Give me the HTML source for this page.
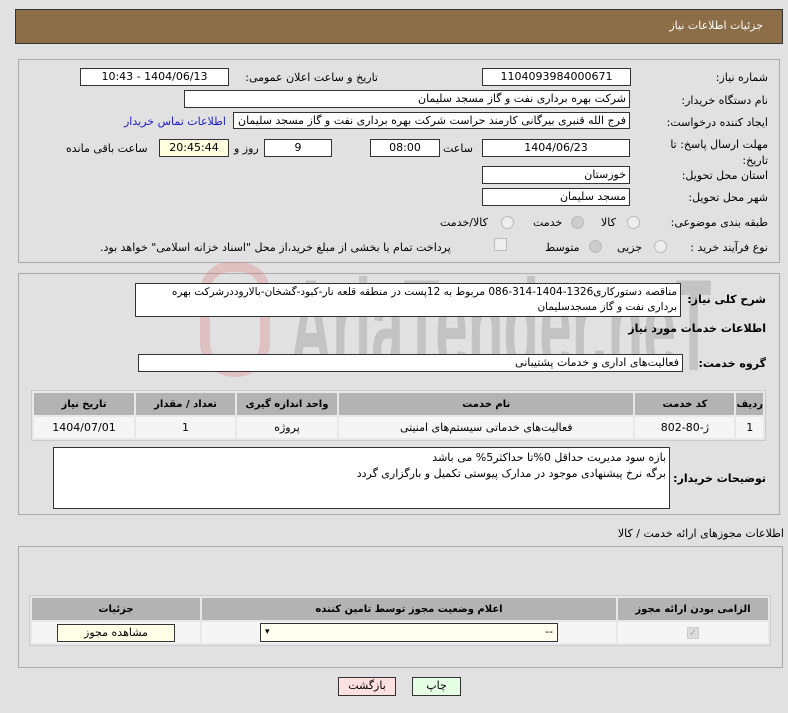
<!DOCTYPE html>
<html><head><meta charset="utf-8"><style>
*{box-sizing:border-box;margin:0;padding:0}
body{width:788px;height:713px;background:#e1e1e1;font-family:"DejaVu Sans","Liberation Sans",sans-serif;font-size:11px;color:#000;position:relative;overflow:hidden}
.a{position:absolute;white-space:nowrap}
.box{position:absolute;background:#fff;border:1px solid #333;font-size:11px;line-height:16px;direction:rtl;overflow:hidden;white-space:nowrap;padding:0 3px}
.c{text-align:center}
.panel{position:absolute;border:1px solid #aaa;background:#e1e1e1}
.lab{position:absolute;direction:rtl;text-align:right;white-space:nowrap;font-size:11px}
.rad{position:absolute;width:13px;height:13px;border-radius:50%;border:1px solid #bbb;background:#eee}
table{position:absolute;border-collapse:separate;border-spacing:2px;background:#e8e8e8;border:1px solid #ccc;direction:rtl}
th{background:#b3b3b3;font-weight:bold;font-size:10px;height:22px}
td{background:#f5f5f5;text-align:center;height:21px;font-size:11px}
.bl{font-weight:bold;font-size:11px}
</style></head><body>
<div class="a" style="left:15px;top:9px;width:768px;height:35px;background:#8b6d48;border:1px solid #333"></div>
<div class="lab" style="right:25px;top:19px;color:#fff">جزئیات اطلاعات نیاز</div>

<div class="panel" style="left:18px;top:59px;width:762px;height:204px"></div>
<div class="lab" style="right:20px;top:71px">شماره نیاز:</div>
<div class="box c" style="left:482px;top:68px;width:149px;height:18px">1104093984000671</div>
<div class="lab" style="left:221px;top:71px;width:157px">تاریخ و ساعت اعلان عمومی:</div>
<div class="box c" style="left:80px;top:68px;width:149px;height:18px">1404/06/13 - 10:43</div>
<div class="lab" style="right:20px;top:94px">نام دستگاه خریدار:</div>
<div class="box" style="left:184px;top:90px;width:446px;height:18px">شرکت بهره برداری نفت و گاز مسجد سلیمان</div>
<div class="lab" style="right:20px;top:116px">ایجاد کننده درخواست:</div>
<div class="box" style="left:233px;top:112px;width:397px;height:17px">فرج الله قنبری بیرگانی کارمند حراست شرکت بهره برداری نفت و گاز مسجد سلیمان</div>
<div class="lab" style="left:124px;top:115px;color:#1a1acc">اطلاعات تماس خریدار</div>
<div class="lab" style="right:20px;top:137px;line-height:16px">مهلت ارسال پاسخ: تا<br>تاریخ:</div>
<div class="box c" style="left:482px;top:139px;width:148px;height:18px">1404/06/23</div>
<div class="lab" style="left:443px;top:142px">ساعت</div>
<div class="box c" style="left:370px;top:139px;width:70px;height:18px">08:00</div>
<div class="box c" style="left:264px;top:139px;width:68px;height:18px">9</div>
<div class="lab" style="left:234px;top:142px">روز و</div>
<div class="box c" style="left:159px;top:139px;width:70px;height:18px;background:#ffffe0">20:45:44</div>
<div class="lab" style="left:66px;top:142px">ساعت باقی مانده</div>
<div class="lab" style="right:20px;top:169px">استان محل تحویل:</div>
<div class="box" style="left:482px;top:166px;width:148px;height:18px">خوزستان</div>
<div class="lab" style="right:20px;top:191px">شهر محل تحویل:</div>
<div class="box" style="left:482px;top:188px;width:148px;height:18px">مسجد سلیمان</div>
<div class="lab" style="right:20px;top:216px">طبقه بندی موضوعی:</div>
<div class="rad" style="left:627px;top:216px"></div><div class="lab" style="left:601px;top:216px">کالا</div>
<div class="rad" style="left:571px;top:216px;background:#ccc"></div><div class="lab" style="left:533px;top:216px">خدمت</div>
<div class="rad" style="left:501px;top:216px"></div><div class="lab" style="left:440px;top:216px">کالا/خدمت</div>
<div class="lab" style="right:20px;top:241px">نوع فرآیند خرید :</div>
<div class="rad" style="left:654px;top:240px"></div><div class="lab" style="left:617px;top:241px">جزیی</div>
<div class="rad" style="left:589px;top:240px;background:#ccc"></div><div class="lab" style="left:545px;top:241px">متوسط</div>
<div class="a" style="left:494px;top:238px;width:13px;height:13px;border:1px solid #bbb;background:#eee"></div>
<div class="lab" style="left:100px;top:241px">پرداخت تمام یا بخشی از مبلغ خرید،از محل "اسناد خزانه اسلامی" خواهد بود.</div>

<div class="panel" style="left:18px;top:273px;width:762px;height:242px"></div>
<div class="a" style="left:290px;top:255px;font-size:130px;line-height:140px;color:rgba(140,140,140,0.35);font-family:'Liberation Sans';font-weight:bold;transform:scaleX(0.45);transform-origin:left">AriaTender.neT</div>
<div class="a" style="left:200px;top:262px;width:70px;height:115px;border:10px solid rgba(220,120,120,0.3);border-radius:30px 30px 35px 35px"></div>
<div class="lab bl" style="right:22px;top:293px">شرح کلی نیاز:</div>
<div class="box" style="left:135px;top:283px;width:546px;height:34px;white-space:normal;line-height:15px;padding-top:1px;font-size:10.5px">مناقصه دستورکاری1326-1404-314-086 مربوط به 12پست در منطقه قلعه نار-کبود-گشخان-بالارود‌درشرکت بهره برداری نفت و گاز مسجدسلیمان</div>
<div class="lab bl" style="right:22px;top:322px">اطلاعات خدمات مورد نیاز</div>
<div class="lab bl" style="right:22px;top:357px">گروه خدمت:</div>
<div class="box" style="left:138px;top:354px;width:545px;height:18px">فعالیت‌های اداری و خدمات پشتیبانی</div>
<table style="left:31px;top:390px;width:735px">
<tr><th style="width:25px">ردیف</th><th style="width:99px">کد خدمت</th><th>نام خدمت</th><th style="width:100px">واحد اندازه گیری</th><th style="width:99px">تعداد / مقدار</th><th style="width:100px">تاریخ نیاز</th></tr>
<tr><td>1</td><td>ژ-80-802</td><td>فعالیت‌های خدماتی سیستم‌های امنیتی</td><td>پروژه</td><td>1</td><td>1404/07/01</td></tr>
</table>
<div class="lab bl" style="right:22px;top:472px">توضیحات خریدار:</div>
<div class="box" style="left:53px;top:447px;width:617px;height:62px;white-space:normal;line-height:16px;padding-top:2px">بازه سود مدیریت حداقل 0%تا حداکثر5% می باشد<br>برگه نرخ پیشنهادی موجود در مدارک پیوستی تکمیل و بارگزاری گردد</div>

<div class="lab" style="right:4px;top:527px">اطلاعات مجوزهای ارائه خدمت / کالا</div>
<div class="panel" style="left:18px;top:546px;width:765px;height:122px"></div>
<table style="left:29px;top:595px;width:742px">
<tr><th style="width:150px">الزامی بودن ارائه مجوز</th><th>اعلام وضعیت مجوز توسط تامین کننده</th><th style="width:168px">جزئیات</th></tr>
<tr><td><span style="display:inline-block;width:12px;height:12px;border:1px solid #ccc;background:#ddd;color:#aaa;font-size:10px;line-height:11px">✓</span></td>
<td><div class="box" style="position:relative;margin:0 auto;left:0;top:0;width:298px;height:19px;background:#fffff0;display:flex;justify-content:space-between;padding:0 4px"><span>--</span><span style="font-size:9px">▾</span></div></td>
<td><div class="box c" style="position:relative;margin:0 auto;width:118px;height:18px;background:#ffffe8">مشاهده مجوز</div></td></tr>
</table>
<div class="box c" style="left:338px;top:677px;width:58px;height:19px;background:#ffe0e0">بازگشت</div>
<div class="box c" style="left:412px;top:677px;width:49px;height:19px;background:#e4ffe4">چاپ</div>
</body></html>
